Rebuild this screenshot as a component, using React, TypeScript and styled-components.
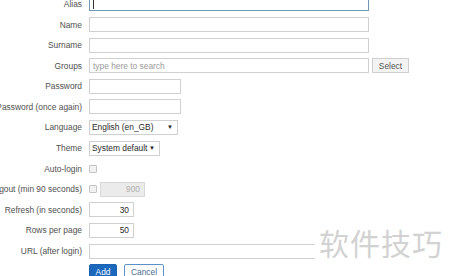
import { styled, createGlobalStyle } from 'styled-components';

const GlobalStyle = createGlobalStyle`
  html, body {
    margin: 0;
    padding: 0;
    background: #ffffff;
    overflow: hidden;
  }
  body {
    font-family: "Liberation Sans", Arial, sans-serif;
    width: 450px;
    height: 276px;
  }
`;

const Page = styled.div`
  position: relative;
  width: 450px;
  height: 276px;
  overflow: hidden;
`;

const Form = styled.div`
  display: grid;
  grid-template-columns: 82px 1fr;
  column-gap: 7px;
  row-gap: 5.6px;
  grid-auto-rows: 15px;
  margin-top: -3.6px;
  font-size: 8.4px;
`;

const Label = styled.div`
  display: flex;
  justify-content: flex-end;
  align-items: center;
  white-space: nowrap;
  color: #505050;
`;

const Field = styled.div`
  display: flex;
  align-items: center;
  gap: 3px;
`;

const TextInput = styled.div<{ $width: number; $focused?: boolean; $align?: string }>`
  box-sizing: border-box;
  width: ${(p) => p.$width}px;
  height: 15px;
  border: 1px solid ${(p) => (p.$focused ? '#6f98b6' : '#d0d0d0')};
  background: #ffffff;
  display: flex;
  align-items: center;
  justify-content: ${(p) => (p.$align === 'right' ? 'flex-end' : 'flex-start')};
  padding: 0 4px 0 3px;
  color: #2a2a2a;
  font-size: 8.4px;
  white-space: nowrap;
`;

const Caret = styled.span`
  width: 1px;
  height: 10px;
  background: #333;
`;

const Placeholder = styled.span`
  color: #9a9a9a;
`;

const DisabledInput = styled(TextInput)`
  background: #ebebeb;
  border-color: #d8d8d8;
  color: #b0b0b0;
`;

const GreyButton = styled.div`
  box-sizing: border-box;
  width: 37px;
  height: 15px;
  border: 1px solid #cfcfcf;
  background: #f3f3f3;
  display: flex;
  align-items: center;
  justify-content: center;
  color: #555;
  font-size: 8.4px;
`;

const SelectBox = styled.div<{ $width: number }>`
  box-sizing: border-box;
  width: ${(p) => p.$width}px;
  height: 15px;
  border: 1px solid #d0d0d0;
  display: flex;
  align-items: center;
  justify-content: space-between;
  padding: 0 4px 0 2px;
  color: #2a2a2a;
  white-space: nowrap;
  overflow: hidden;
`;

const Arrow = styled.span`
  font-size: 6px;
  color: #222;
`;

const Checkbox = styled.div`
  box-sizing: border-box;
  width: 8px;
  height: 8px;
  border: 1px solid #c4c4c4;
  border-radius: 1px;
  background: #f2f2f2;
`;

const Buttons = styled.div`
  display: flex;
  align-items: flex-start;
  gap: 7px;
`;

const Button = styled.div<{ $primary?: boolean }>`
  box-sizing: border-box;
  height: 15px;
  padding: 0 5px;
  display: flex;
  align-items: center;
  justify-content: center;
  border: 1px solid ${(p) => (p.$primary ? '#1a62b3' : '#5b90c8')};
  background: ${(p) => (p.$primary ? '#1b68bd' : '#ffffff')};
  color: ${(p) => (p.$primary ? '#ffffff' : '#4a6d8f')};
  border-radius: 2px;
  font-size: 8.4px;
`;

const Watermark = styled.div`
  position: absolute;
  left: 315px;
  top: 222px;
  width: 135px;
  height: 42px;
  background: #ffffff;
  padding-left: 4px;
  box-sizing: border-box;
  font-family: "Noto Sans CJK SC", sans-serif;
  font-size: 30px;
  line-height: 40px;
  letter-spacing: 1px;
  color: #d2d2d2;
`;

export default function App() {
  return (
    <Page>
      <GlobalStyle />
      <Form>
        <Label>Alias</Label>
        <Field>
          <TextInput $width={280} $focused>
            <Caret />
          </TextInput>
        </Field>

        <Label>Name</Label>
        <Field>
          <TextInput $width={280} />
        </Field>

        <Label>Surname</Label>
        <Field>
          <TextInput $width={280} />
        </Field>

        <Label>Groups</Label>
        <Field>
          <TextInput $width={280}>
            <Placeholder>type here to search</Placeholder>
          </TextInput>
          <GreyButton>Select</GreyButton>
        </Field>

        <Label>Password</Label>
        <Field>
          <TextInput $width={92} />
        </Field>

        <Label>Password (once again)</Label>
        <Field>
          <TextInput $width={92} />
        </Field>

        <Label>Language</Label>
        <Field>
          <SelectBox $width={89}>
            English (en_GB) <Arrow>▼</Arrow>
          </SelectBox>
        </Field>

        <Label>Theme</Label>
        <Field>
          <SelectBox $width={71}>
            System default <Arrow>▼</Arrow>
          </SelectBox>
        </Field>

        <Label>Auto-login</Label>
        <Field>
          <Checkbox />
        </Field>

        <Label>Auto-logout (min 90 seconds)</Label>
        <Field>
          <Checkbox />
          <DisabledInput $width={45} $align="right">900</DisabledInput>
        </Field>

        <Label>Refresh (in seconds)</Label>
        <Field>
          <TextInput $width={45} $align="right">30</TextInput>
        </Field>

        <Label>Rows per page</Label>
        <Field>
          <TextInput $width={45} $align="right">50</TextInput>
        </Field>

        <Label>URL (after login)</Label>
        <Field>
          <TextInput $width={280} />
        </Field>

        <div />
        <Buttons>
          <Button $primary style={{ width: 28 }}>Add</Button>
          <Button style={{ width: 40 }}>Cancel</Button>
        </Buttons>
      </Form>
      <Watermark>软件技巧</Watermark>
    </Page>
  );
}
